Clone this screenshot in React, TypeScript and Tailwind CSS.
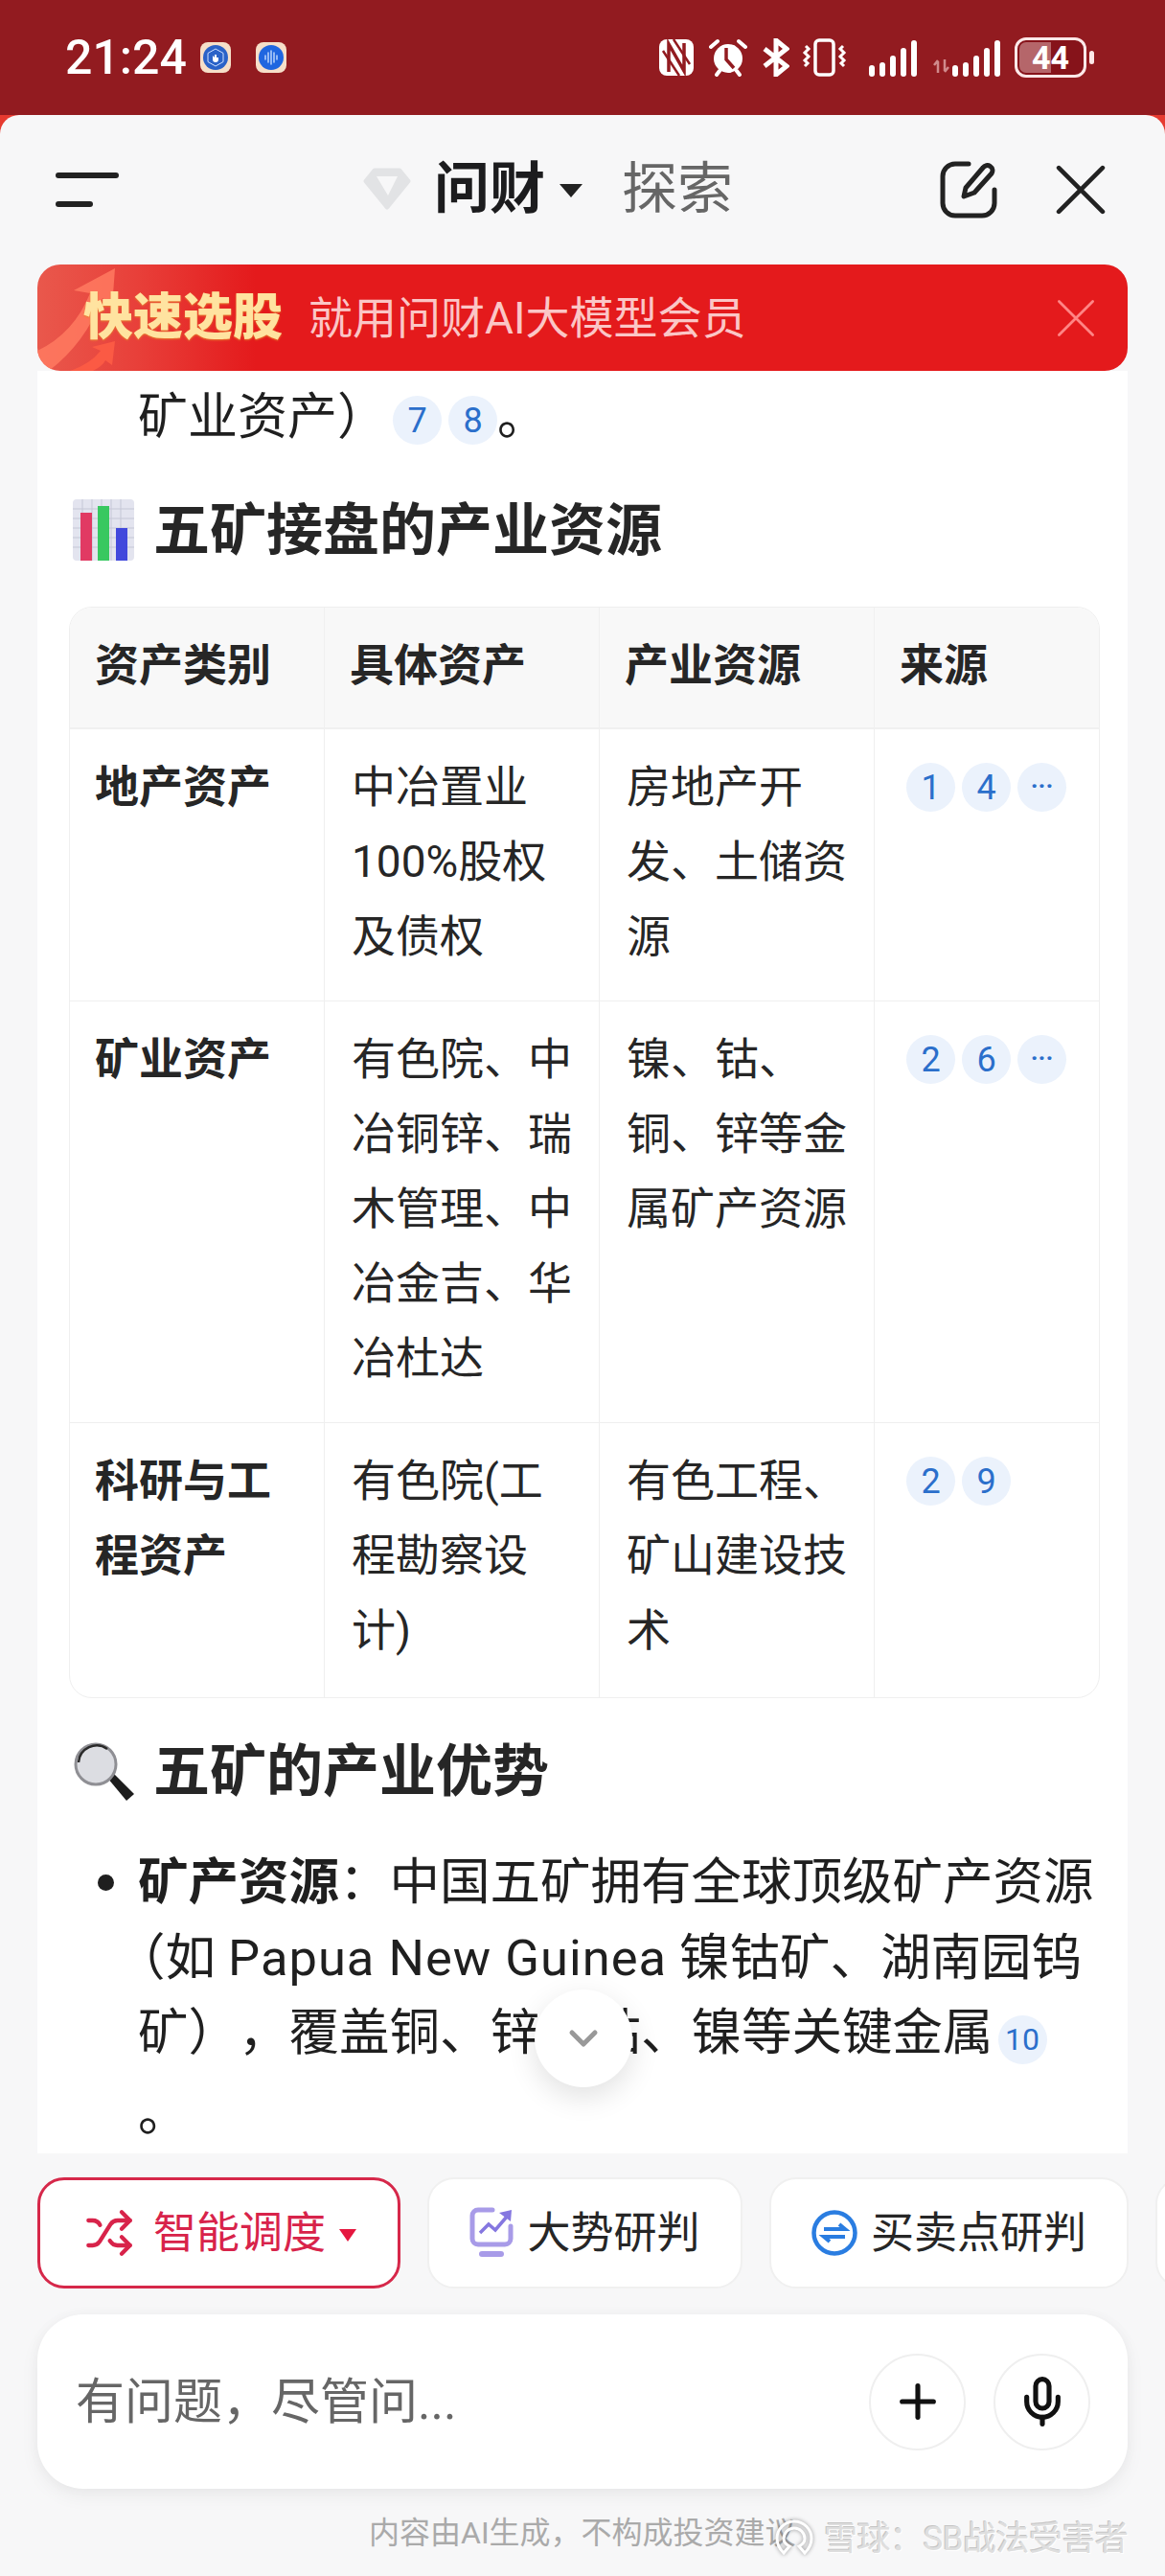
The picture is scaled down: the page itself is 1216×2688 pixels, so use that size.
import React, { FC } from 'react'
import { ChevronDown, Mic, Plus, Shuffle } from 'lucide-react'

const Cite: FC<{ n: string; small?: boolean }> = ({ n, small }) => (
    <span className={`inline-flex h-[51px] w-[51px] shrink-0 items-center justify-center rounded-full bg-[#ebf2fc] text-[#2b6fcb] ${small ? 'text-[32px]' : 'text-[36px]'}`}>
        {n === '…' ? <span className="pb-[4px] text-[26px] font-bold">···</span> : n}
    </span>
)

const Signal: FC = () => (
    <svg width="50" height="40" viewBox="0 0 50 40" fill="#fff">
        <rect x="0" y="28" width="6" height="12" rx="3" />
        <rect x="11" y="25" width="6" height="15" rx="3" />
        <rect x="22" y="18" width="6" height="22" rx="3" />
        <rect x="33" y="10" width="6" height="30" rx="3" />
        <rect x="44" y="2" width="6" height="38" rx="3" />
    </svg>
)

const StatusBar: FC = () => (
    <div className="flex h-[120px] shrink-0 items-center justify-between bg-[#921b20] pl-[68px] pr-[74px] text-white">
        <div className="flex items-center">
            <span className="font-['Roboto'] text-[50px] font-medium leading-none">21:24</span>
            <span className="ml-[14px] flex h-[32px] w-[32px] items-center justify-center rounded-[8px] bg-[#f6dfc9]">
                <svg width="26" height="26" viewBox="0 0 26 26">
                    <circle cx="13" cy="13" r="13" fill="#2a62c8" />
                    <path d="M13 4l8 4.500v9L13 22l-8-4.500v-9z" fill="none" stroke="#cfe0ff" strokeWidth="1" />
                    <path d="M10 11v4q0 3 3 3t3-3v-2h-2v-3h-2v3z" fill="#fff" />
                </svg>
            </span>
            <span className="ml-[26px] flex h-[32px] w-[32px] items-center justify-center rounded-[8px] bg-[#f6dfc9]">
                <svg width="26" height="26" viewBox="0 0 26 26">
                    <circle cx="13" cy="13" r="13" fill="#1f66e0" />
                    <path d="M7 11v4M10 8v10M13 6v14M16 8v10M19 11v4" stroke="#d5e6ff" strokeWidth="1.300" strokeLinecap="round" />
                </svg>
            </span>
        </div>
        <div className="flex items-center">
            <svg width="36" height="38" viewBox="0 0 36 38">
                <rect width="36" height="38" rx="8" fill="#fff" />
                <path d="M10 34V5l16 28V4" stroke="#921b20" strokeWidth="3.500" fill="none" />
                <path d="M4 12l17 26M15 0l17 26" stroke="#921b20" strokeWidth="2.500" fill="none" />
            </svg>
            <svg className="ml-[16px]" width="40" height="40" viewBox="0 0 40 40">
                <circle cx="20" cy="21" r="15" fill="#fff" />
                <path d="M18 10v12l8 9" stroke="#921b20" strokeWidth="3.500" fill="none" />
                <path d="M2 9l7-6M38 9l-7-6M8 38l3-4M32 38l-3-4" stroke="#fff" strokeWidth="4" strokeLinecap="round" />
            </svg>
            <svg className="ml-[16px]" width="28" height="40" viewBox="0 0 28 40" fill="none" stroke="#fff" strokeWidth="5">
                <path d="M2 11l23 18-11 9V2l11 9L2 29" />
            </svg>
            <svg className="ml-[13px]" width="47" height="40" viewBox="0 0 47 40" fill="none" stroke="#fff">
                <rect x="14" y="2" width="19" height="36" rx="4" strokeWidth="3.500" />
                <path d="M4 8l3 3-4 4 4 4-4 4 3 3 -3 3M43 8l-3 3 4 4-4 4 4 4-3 3 3 3" strokeWidth="3" />
            </svg>
            <span className="ml-[23px] flex"><Signal /></span>
            <svg className="ml-[17px] mt-[18px]" width="18" height="14" viewBox="0 0 18 14" fill="none" stroke="#d08a8c" strokeWidth="2.500">
                <path d="M5 14V2M1 6l4-5M12 0v12M16 8l-4 5" />
            </svg>
            <span className="ml-[2px] flex"><Signal /></span>
            <div className="relative ml-[15px] flex h-[42px] w-[75px] items-center justify-center overflow-hidden rounded-[12px] border-[3px] border-[#fde8e8] bg-[#86131a]">
                <span className="absolute inset-y-[2px] left-[2px] w-[33px] rounded-l-[7px] bg-[#b5666a]" />
                <span className="relative font-['Roboto'] text-[34px] font-bold leading-none">44</span>
            </div>
            <span className="ml-[3px] h-[14px] w-[5px] rounded-full bg-[#fde8e8]" />
        </div>
    </div>
)

const CloseIcon: FC<{ size: number; color: string; width: number }> = ({ size, color, width }) => (
    <svg width={size} height={size} viewBox="0 0 50 50" fill="none" stroke={color} strokeWidth={width} strokeLinecap="round">
        <path d="M3 3l44 44M47 3L3 47" />
    </svg>
)

const NavBar: FC = () => (
    <div className="relative flex h-[156px] shrink-0 items-center justify-center">
        <div className="absolute left-[58px] top-[60px] flex flex-col gap-[24px]">
            <span className="h-[6px] w-[66px] rounded-full bg-[#222]" />
            <span className="h-[6px] w-[39px] rounded-full bg-[#222]" />
        </div>
        <div className="flex items-center pb-[3px] pr-[72px]">
            <svg width="50" height="44" viewBox="0 0 50 44">
                <path d="M12 3h26l9 11-22 27L3 14z" fill="#e2e3e5" stroke="#e2e3e5" strokeWidth="5" strokeLinejoin="round" />
                <path d="M14 9h22L26 29z" fill="#f7f7f8" />
            </svg>
            <span className="ml-[24px] text-[58px] font-bold leading-none text-[#1c1c1e]">问财</span>
            <span className="ml-[15px] mt-[4px] h-0 w-0 border-x-[12px] border-t-[14px] border-x-transparent border-t-[#222]" />
            <span className="ml-[41px] text-[58px] leading-none text-[#666]">探索</span>
        </div>
        <svg className="absolute left-[981px] top-[48px]" width="60" height="60" viewBox="0 0 60 60" fill="none" stroke="#222" strokeWidth="5" strokeLinecap="round">
            <path d="M30 3H16A13 13 0 0 0 3 16v28a13 13 0 0 0 13 13h28a13 13 0 0 0 13-13V30" />
            <path d="M25 37l2-9 18-21a5 5 0 0 1 9 6L36 33z" strokeLinejoin="round" />
        </svg>
        <span className="absolute left-[1102px] top-[52px] flex"><CloseIcon size={52} color="#222" width={4.500} /></span>
    </div>
)

const Banner: FC = () => (
    <div className="relative mx-[39px] flex h-[111px] shrink-0 items-center overflow-hidden rounded-[24px] bg-[linear-gradient(90deg,#e9584c_0%,#e8403a_9%,#e41a1c_20%,#e41a1c_100%)] pl-[48px]">
        <svg className="absolute left-0 top-0" width="110" height="111" viewBox="0 0 110 111">
            <path d="M0 90Q38 72 55 30L38 27 81 4 78 45 68 35Q50 82 12 111H0z" fill="#ff7a60" opacity="0.850" />
            <path d="M34 111Q55 104 66 90l-9-4 24-6-3 25-7-5Q68 106 58 111z" fill="#fb5a44" />
        </svg>
        <span className="relative text-[52px] font-black leading-none text-[#ffe3a0] [text-shadow:0_1px_2px_#e8802f]">快速选股</span>
        <span className="relative ml-[27px] text-[46px] leading-none text-[#fbc6c6]">就用问财AI大模型会员</span>
        <span className="absolute right-[34px] top-[36px] flex"><CloseIcon size={40} color="#ff8585" width={3.500} /></span>
    </div>
)

const rows = [
    { title: ['地产资产'], asset: ['中冶置业', '100%股权', '及债权'], res: ['房地产开', '发、土储资', '源'], cites: ['1', '4', '…'] },
    { title: ['矿业资产'], asset: ['有色院、中', '冶铜锌、瑞', '木管理、中', '冶金吉、华', '冶杜达'], res: ['镍、钴、', '铜、锌等金', '属矿产资源'], cites: ['2', '6', '…'] },
    { title: ['科研与工', '程资产'], asset: ['有色院(工', '程勘察设', '计)'], res: ['有色工程、', '矿山建设技', '术'], cites: ['2', '9'] },
]

const Lines: FC<{ lines: string[] }> = ({ lines }) => (
    <>
        {lines.map(l => (
            <div key={l} className="whitespace-nowrap">{l}</div>
        ))}
    </>
)

const ResourceTable: FC = () => (
    <div className="ml-[33px] mr-[29px] mt-[32px] grid grid-cols-[266px_287px_287px_1fr] overflow-hidden rounded-[24px] border border-[#efefef] text-[46px] leading-[78px] text-[#262626]">
        {['资产类别', '具体资产', '产业资源', '来源'].map((h, i) => (
            <div key={h} className={`flex h-[127px] items-center border-b-2 border-[#f0f0f0] bg-[#f8f8f8] pb-[6px] pl-[26px] font-bold ${i < 3 ? 'border-r' : ''}`}>
                {h}
            </div>
        ))}
        {rows.map((r, idx) => (
            <React.Fragment key={r.title[0]}>
                <div className={`border-r border-[#efefef] pl-[26px] pt-[21px] font-bold ${idx < 2 ? 'border-b pb-[28px]' : 'pb-[31px]'}`}><Lines lines={r.title} /></div>
                <div className={`border-r border-[#efefef] pl-[28px] pt-[21px] ${idx < 2 ? 'border-b pb-[28px]' : 'pb-[31px]'}`}><Lines lines={r.asset} /></div>
                <div className={`border-r border-[#efefef] pl-[28px] pt-[21px] ${idx < 2 ? 'border-b pb-[28px]' : 'pb-[31px]'}`}><Lines lines={r.res} /></div>
                <div className={`flex items-start gap-[7px] border-[#efefef] pl-[33px] pt-[35px] ${idx < 2 ? 'border-b' : ''}`}>
                    {r.cites.map(c => <Cite key={c} n={c} />)}
                </div>
            </React.Fragment>
        ))}
    </div>
)

const Article: FC = () => (
    <div className="relative mx-[39px] min-h-0 flex-1 overflow-hidden bg-white text-[#1f1f1f]">
        <div className="ml-[105px] mt-[9px] flex h-[80px] items-center text-[52px] leading-none">
            <span>矿业资产）</span>
            <span className="ml-[6px]"><Cite n="7" /></span>
            <span className="ml-[7px]"><Cite n="8" /></span>
            <span>。</span>
        </div>
        <div className="ml-[37px] mt-[29px] flex h-[96px] items-center text-[#262626]">
            <svg width="64" height="64" viewBox="0 0 64 64" className="shrink-0">
                <rect width="64" height="64" rx="4" fill="#e3e4ef" />
                <path d="M0 10h64M0 20h64M0 30h64M0 40h64M0 50h64M10 0v64M20 0v64M30 0v64M40 0v64M50 0v64" stroke="#c5c7d6" strokeWidth="1" />
                <rect x="8" y="14" width="12" height="50" fill="#e13a63" />
                <rect x="26" y="7" width="12" height="57" fill="#38c860" />
                <rect x="45" y="30" width="12" height="34" fill="#4148dc" />
            </svg>
            <span className="ml-[20px] text-[59px] font-bold leading-none">五矿接盘的产业资源</span>
        </div>
        <ResourceTable />
        <div className="ml-[37px] mt-[28px] flex h-[96px] items-center text-[#262626]">
            <svg width="64" height="62" viewBox="0 0 64 62" className="shrink-0">
                <path d="M36 38l6-5 22 22-8 7z" fill="#1d1d1d" />
                <circle cx="24" cy="24" r="21" fill="#dcdde2" stroke="#8f8f94" strokeWidth="3" />
                <path d="M6 22A19 19 0 0 1 36 8" fill="none" stroke="#2a2a2a" strokeWidth="2.500" />
            </svg>
            <span className="ml-[20px] text-[59px] font-bold leading-none">五矿的产业优势</span>
        </div>
        <div className="relative ml-[105px] mt-[29px] whitespace-nowrap text-[52.5px] leading-[79px] [text-spacing-trim:space-all]">
            <span className="absolute left-[-42px] top-[31px] h-[17px] w-[17px] rounded-full bg-[#1f1f1f]" />
            <div><span className="font-bold">矿产资源</span>：中国五矿拥有全球顶级矿产资源</div>
            <div><span className="ml-[-24px]">（</span>如 <span className="tracking-[1px]">Papua New Guinea</span> 镍钴矿、湖南园钨</div>
            <div className="flex h-[77px] items-center">矿），覆盖铜、锌、钴、镍等关键金属<span className="ml-[5px]"><Cite n="10" small /></span></div>
            <div className="mt-[6px]">。</div>
        </div>
    </div>
)

const Tab: FC<{ label: string; icon: React.ReactNode; w: string }> = ({ label, icon, w }) => (
    <div className={`flex h-[116px] shrink-0 items-center justify-center gap-[14px] rounded-[28px] border-2 border-[#f0f0f0] bg-white text-[45px] leading-none text-[#262626] ${w}`}>
        {icon}
        <span>{label}</span>
    </div>
)

const TabRow: FC = () => (
    <div className="mt-[25px] flex shrink-0 gap-[28px] overflow-hidden pl-[39px]">
        <div className="flex h-[116px] w-[379px] shrink-0 items-center rounded-[28px] border-[3px] border-[#d6284a] bg-white pl-[46px] text-[45px] leading-none text-[#d8234a]">
            <Shuffle size={52} strokeWidth={2} />
            <span className="ml-[20px]">智能调度</span>
            <span className="ml-[14px] mt-[4px] h-0 w-0 border-x-[9px] border-t-[13px] border-x-transparent border-t-[#e5173f]" />
        </div>
        <Tab
            label="大势研判"
            w="w-[329px]"
            icon={
                <svg width="46" height="54" viewBox="0 0 46 54" fill="none">
                    <path d="M24 3H9a6 6 0 0 0-6 6v24a6 6 0 0 0 6 6h28a6 6 0 0 0 6-6V20" stroke="#a89be8" strokeWidth="5" strokeLinecap="round" />
                    <path d="M11 27l9-9 7 6 12-14" stroke="#8577e0" strokeWidth="3.500" />
                    <path d="M31 6l13-3-1 12z" fill="#8577e0" />
                    <path d="M13 49h20" stroke="#a89be8" strokeWidth="6" strokeLinecap="round" />
                </svg>
            }
        />
        <Tab
            label="买卖点研判"
            w="w-[375px]"
            icon={
                <svg width="48" height="48" viewBox="0 0 48 48" fill="none">
                    <circle cx="24" cy="24" r="21.500" stroke="#2a7de1" strokeWidth="4.500" />
                    <path d="M13 20h22l-6-5M35 28H13l6 5" stroke="#2a7de1" strokeWidth="4" />
                </svg>
            }
        />
        <div className="h-[116px] w-[60px] shrink-0 rounded-[28px] border-2 border-[#f0f0f0] bg-white" />
    </div>
)

const InputBox: FC = () => (
    <div className="mx-[39px] mt-[27px] flex h-[182px] shrink-0 items-center rounded-[48px] bg-white pl-[40px] pr-[39px] shadow-[0_8px_20px_rgba(0,0,0,0.05),0_0_14px_rgba(0,0,0,0.03)]">
        <span className="flex-1 text-[51px] leading-none text-[#666]">有问题，尽管问...</span>
        <div className="flex h-[101px] w-[101px] items-center justify-center rounded-full border-2 border-[#efefef]">
            <Plus size={56} strokeWidth={2.200} className="text-[#111]" />
        </div>
        <div className="ml-[29px] flex h-[101px] w-[101px] items-center justify-center rounded-full border-2 border-[#efefef]">
            <Mic size={56} strokeWidth={2.200} className="text-[#111]" />
        </div>
    </div>
)

const App: FC = () => {
    return (
        <div lang="zh-CN" className="relative flex h-[2688px] w-[1216px] flex-col overflow-hidden bg-[#e63a30] font-['Roboto','Noto_Sans_CJK_SC',sans-serif]">
            <StatusBar />
            <div className="flex min-h-0 flex-1 flex-col rounded-t-[20px] bg-[#f7f7f8]">
                <NavBar />
                <Banner />
                <Article />
                <TabRow />
                <InputBox />
                <div className="flex h-[91px] shrink-0 items-start pl-[385px] pt-[30px] text-[32px] leading-none text-[#aaa]">
                    内容由AI生成，不构成投资建议
                </div>
            </div>
            <button className="absolute left-[558px] top-[2076px] flex h-[102px] w-[102px] items-center justify-center rounded-full bg-white shadow-[0_10px_30px_rgba(0,0,0,0.12)]">
                <ChevronDown size={48} strokeWidth={2.500} className="text-[#999]" />
            </button>
            <div className="absolute left-[808px] top-[2628px] flex items-center text-[35px] leading-none text-[#dedede] [text-shadow:1px_1px_0_#fff,-1px_-1px_0_#c4c4c4]">
                <svg width="42" height="42" viewBox="0 0 42 42" fill="none" stroke="#fff" strokeWidth="3" className="drop-shadow-[0_0_2px_rgba(0,0,0,0.4)]">
                    <path d="M21 3c10 0 18 8 18 18 0 6-3 11-7 15l-6-7c4-2 6-5 6-8 0-6-5-11-11-11S10 15 10 21c0 3 2 6 6 8l-6 7C6 32 3 27 3 21 3 11 11 3 21 3z" />
                </svg>
                <span className="ml-[10px] tracking-[-0.5px]">雪球：SB战法受害者</span>
            </div>
        </div>
    )
}

export default App
